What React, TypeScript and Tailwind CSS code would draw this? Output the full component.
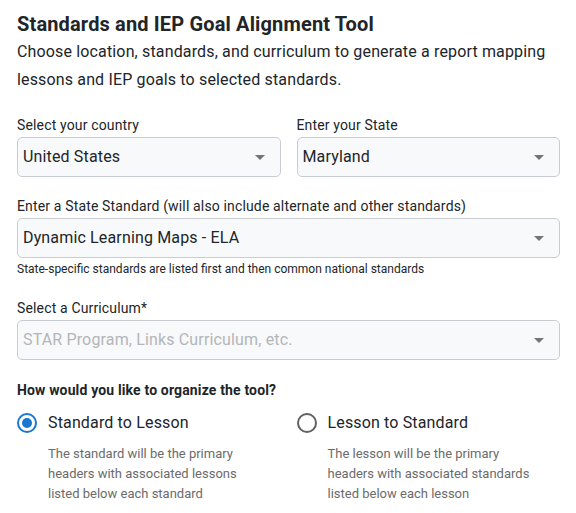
import React from 'react'

const font = { fontFamily: 'Roboto, "Liberation Sans", sans-serif' }

function Caret() {
  return (
    <svg width="10" height="5" viewBox="0 0 10 5" className="shrink-0">
      <path d="M0 0 L5 5 L10 0 Z" fill="#757575" />
    </svg>
  )
}

function SelectBox({ value, placeholder }: { value?: string; placeholder?: string }) {
  return (
    <div className="flex h-10 items-center justify-between rounded-[5px] border border-[#c9cdd2] bg-[#f8f9fa] pl-[5px] pr-[15px]">
      {value ? (
        <span className="text-base tracking-[0.00938em] text-[#212529]">{value}</span>
      ) : (
        <span className="text-base tracking-[0.00938em] text-[#b3b6b9]">{placeholder}</span>
      )}
      <Caret />
    </div>
  )
}

function Field({ label, children }: { label: string; children: React.ReactNode }) {
  return (
    <div className="flex flex-col gap-[2px]">
      <label className="text-sm leading-5 tracking-[0.01071em] text-[#212529]">{label}</label>
      {children}
    </div>
  )
}

function Radio({ checked, label, lines }: { checked: boolean; label: string; lines: string[] }) {
  return (
    <div className="flex flex-col">
      <div className="flex h-6 items-center gap-[11px]">
        <span
          className={`flex h-5 w-5 items-center justify-center rounded-full border-2 ${
            checked ? 'border-[#1976d2]' : 'border-[#616161]'
          }`}
        >
          {checked && <span className="h-[10px] w-[10px] rounded-full bg-[#1976d2]" />}
        </span>
        <span className="text-base tracking-[0.00938em] text-[#212529]">{label}</span>
      </div>
      <div className="mt-[9px] pl-[31px] text-[13px] leading-5 text-[#6b6b6b]">
        {lines.map((l) => (
          <div key={l}>{l}</div>
        ))}
      </div>
    </div>
  )
}

export default function App() {
  return (
    <div className="min-h-screen bg-white pb-4 pl-[17px] pr-4 pt-[10px]" style={font}>
      <h1 className="text-xl font-bold leading-7 tracking-[0.0075em] text-[#212529]">
        Standards and IEP Goal Alignment Tool
      </h1>
      <p className="text-base leading-7 tracking-[0.00938em] text-[#212529]">
        Choose location, standards, and curriculum to generate a report mapping lessons and IEP goals to selected
        standards.
      </p>

      <div className="mt-[21px] grid grid-cols-2 gap-4">
        <Field label="Select your country">
          <SelectBox value="United States" />
        </Field>
        <Field label="Enter your State">
          <SelectBox value="Maryland" />
        </Field>
      </div>

      <div className="mt-[19px]">
        <Field label="Enter a State Standard (will also include alternate and other standards)">
          <SelectBox value="Dynamic Learning Maps - ELA" />
        </Field>
        <p className="mt-[3px] text-xs leading-4 text-[#212529]">
          State-specific standards are listed first and then common national standards
        </p>
      </div>

      <div className="mt-[21px]">
        <Field label="Select a Curriculum*">
          <SelectBox placeholder="STAR Program, Links Curriculum, etc." />
        </Field>
      </div>

      <h2 className="mt-[20px] text-sm font-bold leading-5 tracking-[0.01071em] text-[#212529]">
        How would you like to organize the tool?
      </h2>
      <div className="mt-[11px] grid grid-cols-2 gap-4">
        <Radio
          checked
          label="Standard to Lesson"
          lines={['The standard will be the primary', 'headers with associated lessons', 'listed below each standard']}
        />
        <Radio
          checked={false}
          label="Lesson to Standard"
          lines={['The lesson will be the primary', 'headers with associated standards', 'listed below each lesson']}
        />
      </div>
    </div>
  )
}
